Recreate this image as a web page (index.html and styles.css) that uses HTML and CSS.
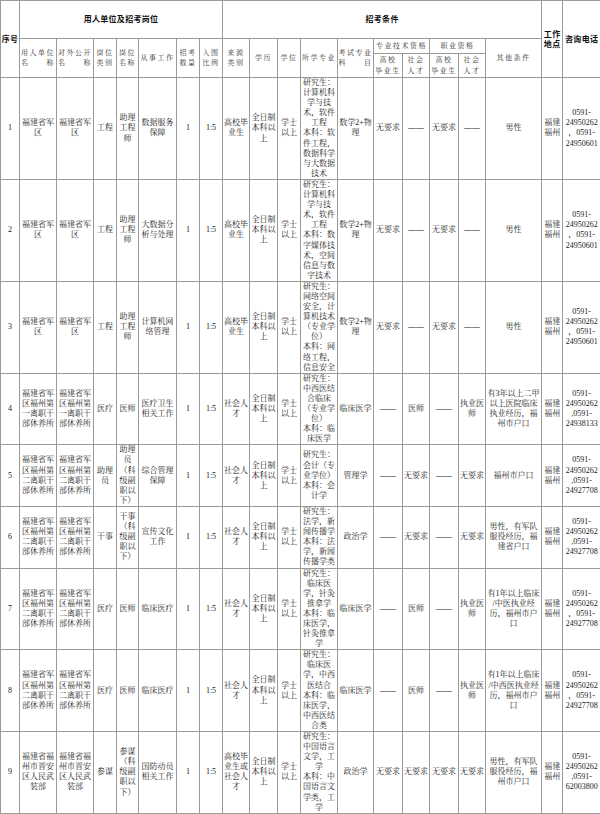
FILE: index.html
```html
<!DOCTYPE html>
<html lang="zh-CN">
<head>
<meta charset="utf-8">
<title>招考岗位表</title>
<link rel="stylesheet" href="styles.css">
</head>
<body>
<table class="grid">
<colgroup>
<col class="c19"><col class="c37"><col class="c37"><col class="c23"><col class="c22"><col class="c38"><col class="c23"><col class="c23"><col class="c27"><col class="c28"><col class="c23"><col class="c37"><col class="c36"><col class="c29"><col class="c27"><col class="c29"><col class="c27"><col class="c56"><col class="c21"><col class="c38">
</colgroup>
<thead>
<tr class="hr1">
<th rowspan="3" class="bold">序号</th>
<th colspan="7" class="bold">用人单位及招考岗位</th>
<th colspan="10" class="bold">招考条件</th>
<th rowspan="3" class="bold">工作<br>地点</th>
<th rowspan="3" class="bold">咨询电话</th>
</tr>
<tr class="hr2">
<th rowspan="2">用人单位<br>名　　称</th>
<th rowspan="2">对外公开<br>名　　称</th>
<th rowspan="2">岗位<br>类别</th>
<th rowspan="2">岗位<br>名称</th>
<th rowspan="2">从事工作</th>
<th rowspan="2">招考<br>数量</th>
<th rowspan="2">入围<br>比例</th>
<th rowspan="2">来源<br>类别</th>
<th rowspan="2">学历</th>
<th rowspan="2">学位</th>
<th rowspan="2">所学专业</th>
<th rowspan="2">考试专业<br>科　　目</th>
<th colspan="2">专业技术资格</th>
<th colspan="2">职业资格</th>
<th rowspan="2">其他条件</th>
</tr>
<tr class="hr3">
<th>高校<br>毕业生</th>
<th>社会<br>人才</th>
<th>高校<br>毕业生</th>
<th>社会<br>人才</th>
</tr>
</thead>
<tbody>
<tr>
<td>1</td><td>福建省军<br>区</td><td>福建省军<br>区</td><td>工程</td><td>助理<br>工程<br>师</td><td>数据服务<br>保障</td><td>1</td><td>1:5</td><td>高校毕<br>业生</td><td>全日制<br>本科以<br>上</td><td>学士<br>以上</td>
<td>研究生：<br>计算机科<br>学与技<br>术，软件<br>工程<br>本科：软<br>件工程，<br>数据科学<br>与大数据<br>技术</td>
<td>数学2+物<br>理</td><td>无要求</td><td>——</td><td>无要求</td><td>——</td><td>男性</td><td>福建<br>福州</td><td>0591-<br>24950262<br>，0591-<br>24950601</td>
</tr>
<tr>
<td>2</td><td>福建省军<br>区</td><td>福建省军<br>区</td><td>工程</td><td>助理<br>工程<br>师</td><td>大数据分<br>析与处理</td><td>1</td><td>1:5</td><td>高校毕<br>业生</td><td>全日制<br>本科以<br>上</td><td>学士<br>以上</td>
<td>研究生：<br>计算机科<br>学与技<br>术，软件<br>工程<br>本科：数<br>字媒体技<br>术，空间<br>信息与数<br>字技术</td>
<td>数学2+物<br>理</td><td>无要求</td><td>——</td><td>无要求</td><td>——</td><td>男性</td><td>福建<br>福州</td><td>0591-<br>24950262<br>，0591-<br>24950601</td>
</tr>
<tr>
<td>3</td><td>福建省军<br>区</td><td>福建省军<br>区</td><td>工程</td><td>助理<br>工程<br>师</td><td>计算机网<br>络管理</td><td>1</td><td>1:5</td><td>高校毕<br>业生</td><td>全日制<br>本科以<br>上</td><td>学士<br>以上</td>
<td>研究生：<br>网络空间<br>安全，计<br>算机技术<br>（专业学<br>位）<br>本科：网<br>络工程，<br>信息安全</td>
<td>数学2+物<br>理</td><td>无要求</td><td>——</td><td>无要求</td><td>——</td><td>男性</td><td>福建<br>福州</td><td>0591-<br>24950262<br>，0591-<br>24950601</td>
</tr>
<tr>
<td>4</td><td>福建省军<br>区福州第<br>一离职干<br>部休养所</td><td>福建省军<br>区福州第<br>一离职干<br>部休养所</td><td>医疗</td><td>医师</td><td>医疗卫生<br>相关工作</td><td>1</td><td>1:5</td><td>社会人<br>才</td><td>全日制<br>本科以<br>上</td><td>学士<br>以上</td>
<td>研究生：<br>中西医结<br>合临床<br>（专业学<br>位）<br>本科：临<br>床医学</td>
<td>临床医学</td><td>——</td><td>医师</td><td>——</td><td>执业医<br>师</td><td>有3年以上二甲<br>以上医院临床<br>执业经历，福<br>州市户口</td><td>福建<br>福州</td><td>0591-<br>24950262<br>,0591-<br>24938133</td>
</tr>
<tr>
<td>5</td><td>福建省军<br>区福州第<br>二离职干<br>部休养所</td><td>福建省军<br>区福州第<br>二离职干<br>部休养所</td><td>助理<br>员</td><td>助理<br>员<br>（科<br>级副<br>职以<br>下）</td><td>综合管理<br>保障</td><td>1</td><td>1:5</td><td>社会人<br>才</td><td>全日制<br>本科以<br>上</td><td>学士<br>以上</td>
<td>研究生：<br>会计（专<br>业学位）<br>本科：会<br>计学</td>
<td>管理学</td><td>——</td><td>无要求</td><td>——</td><td>无要求</td><td>福州市户口</td><td>福建<br>福州</td><td>0591-<br>24950262<br>,0591-<br>24927708</td>
</tr>
<tr>
<td>6</td><td>福建省军<br>区福州第<br>二离职干<br>部休养所</td><td>福建省军<br>区福州第<br>二离职干<br>部休养所</td><td>干事</td><td>干事<br>（科<br>级副<br>职以<br>下）</td><td>宣传文化<br>工作</td><td>1</td><td>1:5</td><td>社会人<br>才</td><td>全日制<br>本科以<br>上</td><td>学士<br>以上</td>
<td>研究生：<br>法学，新<br>闻传播学<br>本科：法<br>学，新闻<br>传播学类</td>
<td>政治学</td><td>——</td><td>无要求</td><td>——</td><td>无要求</td><td>男性，有军队<br>服役经历，福<br>建省户口</td><td>福建<br>福州</td><td>0591-<br>24950262<br>,0591-<br>24927708</td>
</tr>
<tr>
<td>7</td><td>福建省军<br>区福州第<br>二离职干<br>部休养所</td><td>福建省军<br>区福州第<br>二离职干<br>部休养所</td><td>医疗</td><td>医师</td><td>临床医疗</td><td>1</td><td>1:5</td><td>社会人<br>才</td><td>全日制<br>本科以<br>上</td><td>学士<br>以上</td>
<td>研究生：<br>临床医<br>学，针灸<br>推拿学<br>本科：临<br>床医学，<br>针灸推拿<br>学</td>
<td>临床医学</td><td>——</td><td>医师</td><td>——</td><td>执业医<br>师</td><td>有1年以上临床<br>/中医执业经<br>历，福州市户<br>口</td><td>福建<br>福州</td><td>0591-<br>24950262<br>，0591-<br>24927708</td>
</tr>
<tr>
<td>8</td><td>福建省军<br>区福州第<br>二离职干<br>部休养所</td><td>福建省军<br>区福州第<br>二离职干<br>部休养所</td><td>医疗</td><td>医师</td><td>临床医疗</td><td>1</td><td>1:5</td><td>社会人<br>才</td><td>全日制<br>本科以<br>上</td><td>学士<br>以上</td>
<td>研究生：<br>临床医<br>学，中西<br>医结合<br>本科：临<br>床医学，<br>中西医结<br>合类</td>
<td>临床医学</td><td>——</td><td>医师</td><td>——</td><td>执业医<br>师</td><td>有1年以上临床<br>/中西医执业经<br>历，福州市户<br>口</td><td>福建<br>福州</td><td>0591-<br>24950262<br>，0591-<br>24927708</td>
</tr>
<tr>
<td>9</td><td>福建省福<br>州市晋安<br>区人民武<br>装部</td><td>福建省福<br>州市晋安<br>区人民武<br>装部</td><td>参谋</td><td>参谋<br>（科<br>级副<br>职以<br>下）</td><td>国防动员<br>相关工作</td><td>1</td><td>1:5</td><td>高校毕<br>业生或<br>社会人<br>才</td><td>全日制<br>本科以<br>上</td><td>学士<br>以上</td>
<td>研究生：<br>中国语言<br>文学，工<br>学<br>本科：中<br>国语言文<br>学类，工<br>学</td>
<td>政治学</td><td>无要求</td><td>无要求</td><td>无要求</td><td>无要求</td><td>男性，有军队<br>服役经历，福<br>州市户口</td><td>福建<br>福州</td><td>0591-<br>24950262<br>,0591-<br>62003800</td>
</tr>
</tbody>
</table>
</body>
</html>
```
FILE: styles.css
```css
html, body {
  margin: 0;
  padding: 0;
  background: #ffffff;
}

.grid {
  border-collapse: collapse;
  table-layout: fixed;
  width: 600px;
  font-family: "Liberation Serif", "Noto Serif CJK SC", "Noto Sans CJK SC", serif;
  font-size: 8px;
  line-height: 10.1px;
  color: #222222;
}

.grid th,
.grid td {
  border: 1px solid #9a9a9a;
  padding: 0;
  text-align: center;
  vertical-align: middle;
  white-space: nowrap;
  overflow: hidden;
}

.grid th {
  font-weight: normal;
  font-size: 7px;
  letter-spacing: 1.5px;
  color: #2e2e2e;
}

.grid th.bold {
  font-family: "Noto Sans CJK SC", sans-serif;
  font-weight: bold;
  font-size: 8px;
  letter-spacing: 0.3px;
  color: #111111;
}

.hr1 { height: 38px; }
.hr2 { height: 15px; }
.hr3 { height: 24px; }

.c19 { width: 19px; }
.c21 { width: 21px; }
.c22 { width: 22px; }
.c23 { width: 23px; }
.c27 { width: 27px; }
.c28 { width: 28px; }
.c29 { width: 29px; }
.c36 { width: 36px; }
.c37 { width: 37px; }
.c38 { width: 38px; }
.c56 { width: 56px; }
```
